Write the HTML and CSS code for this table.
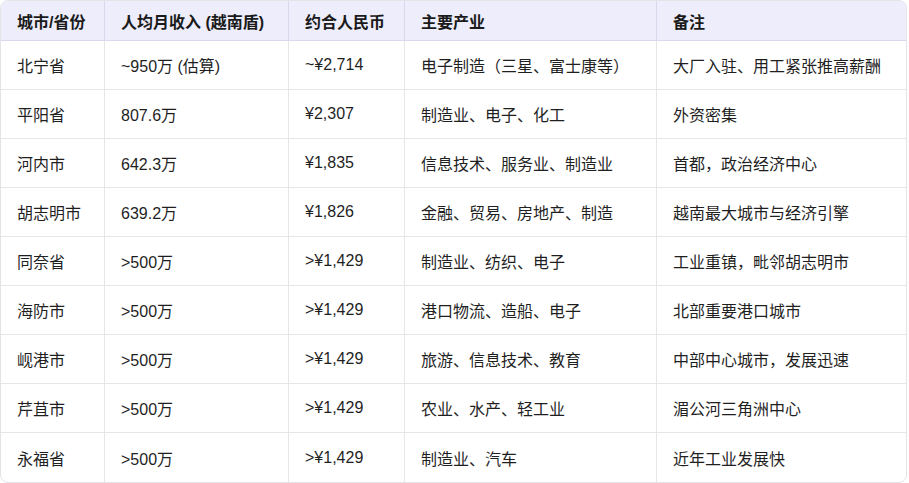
FILE: index.html
```html
<!DOCTYPE html>
<html lang="zh-CN">
<head>
<meta charset="utf-8">
<title>越南各省市人均月收入</title>
<link rel="stylesheet" href="styles.css">
</head>
<body>
<div class="table-wrap">
  <table class="data-table">
    <thead>
      <tr>
        <th class="c1">城市/省份</th>
        <th class="c2">人均月收入 (越南盾)</th>
        <th class="c3">约合人民币</th>
        <th class="c4">主要产业</th>
        <th class="c5">备注</th>
      </tr>
    </thead>
    <tbody>
      <tr><td>北宁省</td><td>~950万 (估算)</td><td>~¥2,714</td><td>电子制造（三星、富士康等）</td><td>大厂入驻、用工紧张推高薪酬</td></tr>
      <tr><td>平阳省</td><td>807.6万</td><td>¥2,307</td><td>制造业、电子、化工</td><td>外资密集</td></tr>
      <tr><td>河内市</td><td>642.3万</td><td>¥1,835</td><td>信息技术、服务业、制造业</td><td>首都，政治经济中心</td></tr>
      <tr><td>胡志明市</td><td>639.2万</td><td>¥1,826</td><td>金融、贸易、房地产、制造</td><td>越南最大城市与经济引擎</td></tr>
      <tr><td>同奈省</td><td>&gt;500万</td><td>&gt;¥1,429</td><td>制造业、纺织、电子</td><td>工业重镇，毗邻胡志明市</td></tr>
      <tr><td>海防市</td><td>&gt;500万</td><td>&gt;¥1,429</td><td>港口物流、造船、电子</td><td>北部重要港口城市</td></tr>
      <tr><td>岘港市</td><td>&gt;500万</td><td>&gt;¥1,429</td><td>旅游、信息技术、教育</td><td>中部中心城市，发展迅速</td></tr>
      <tr><td>芹苴市</td><td>&gt;500万</td><td>&gt;¥1,429</td><td>农业、水产、轻工业</td><td>湄公河三角洲中心</td></tr>
      <tr><td>永福省</td><td>&gt;500万</td><td>&gt;¥1,429</td><td>制造业、汽车</td><td>近年工业发展快</td></tr>
    </tbody>
  </table>
</div>
</body>
</html>
```
FILE: styles.css
```css
html, body {
  margin: 0;
  padding: 0;
  background: #ffffff;
}

body {
  font-family: "Liberation Sans", "Noto Sans CJK SC", sans-serif;
  font-size: 16px;
  color: #1f1f1f;
}

.table-wrap {
  width: 907px;
  box-sizing: border-box;
  border: 1px solid #e3e3e8;
  border-radius: 8px;
  overflow: hidden;
}

.data-table {
  width: 100%;
  table-layout: fixed;
  border-collapse: separate;
  border-spacing: 0;
}

.data-table th,
.data-table td {
  box-sizing: border-box;
  padding: 0 16px;
  text-align: left;
  vertical-align: middle;
  white-space: nowrap;
  border-right: 1px solid #e6e6e6;
  border-bottom: 1px solid #e6e6e6;
}

.data-table th:last-child,
.data-table td:last-child {
  border-right: none;
}

.data-table tbody tr:last-child td {
  border-bottom: none;
}

.data-table th {
  height: 40px;
  background: #ededfb;
  font-weight: 700;
  color: #1a1a1a;
  border-color: #d9d9ee;
}

.data-table td {
  height: 49px;
}

.c1 { width: 104px; }
.c2 { width: 184px; }
.c3 { width: 116px; }
.c4 { width: 252px; }
.c5 { width: auto; }
```
